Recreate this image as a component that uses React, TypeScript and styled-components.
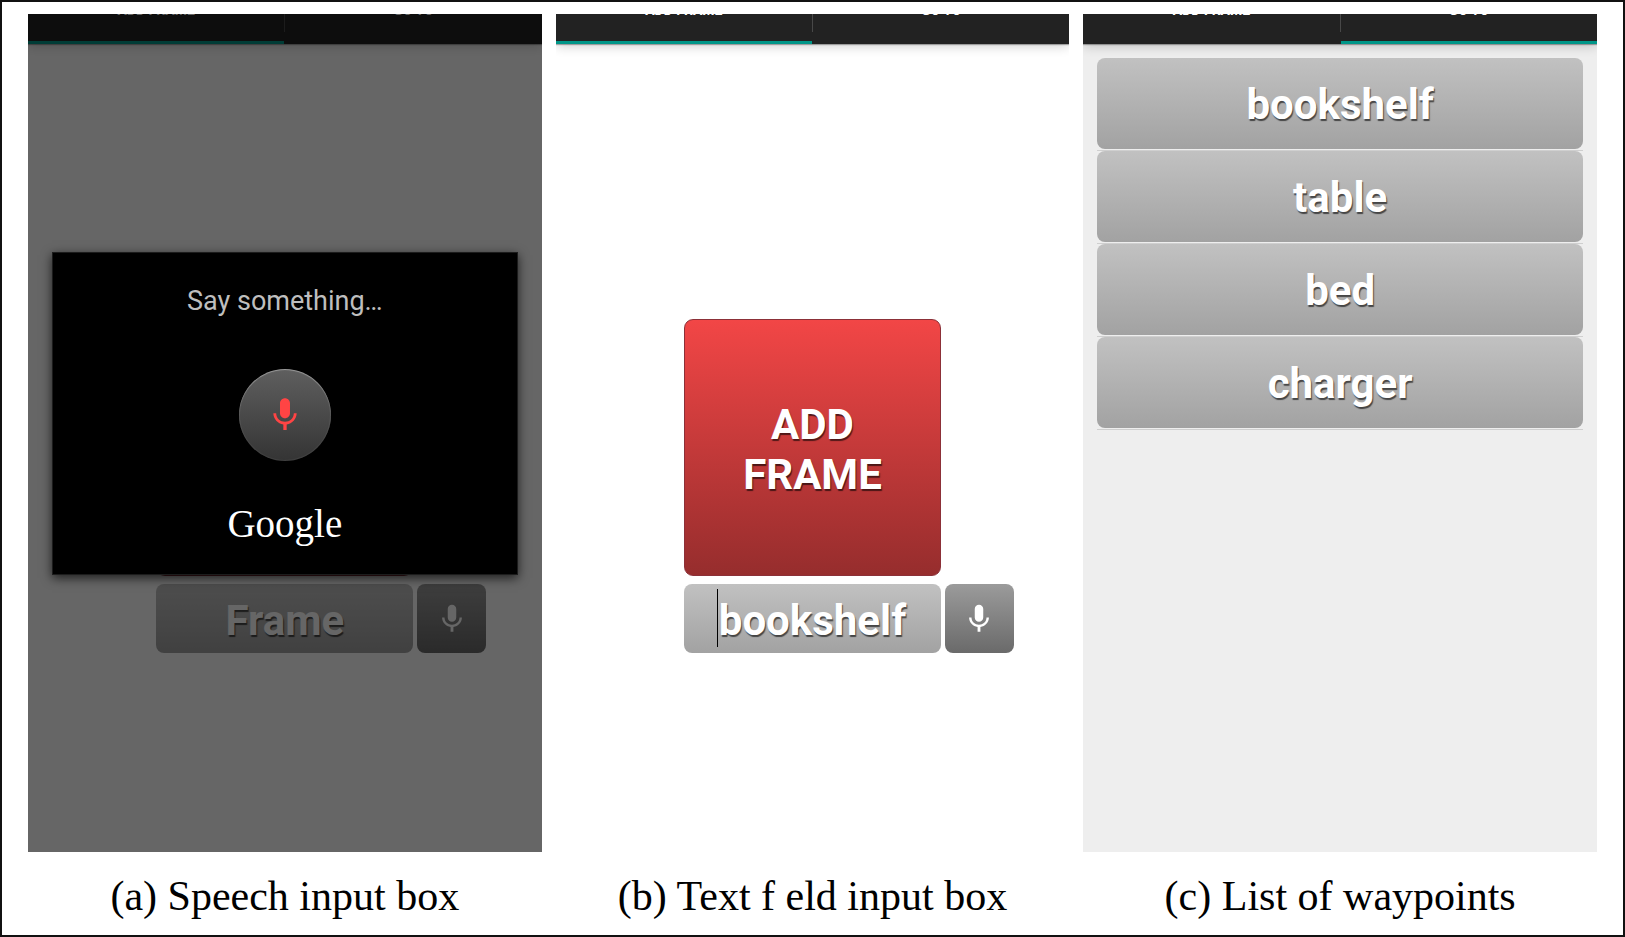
import React from 'react';
import styled, { createGlobalStyle } from 'styled-components';

const GlobalStyle = createGlobalStyle`
  *, *::before, *::after { box-sizing: border-box; }
  body { margin: 0; background: #fff; }
  button, input { font: inherit; margin: 0; border: 0; padding: 0; }
`;

const Sheet = styled.main`
  display: grid;
  grid-template-columns: repeat(3, minmax(0, 1fr));
  column-gap: 14px;
  min-height: 100vh;
  padding: 12px 26px 0;
  border: 2px solid #111;
  background: #fff;
`;

const Figure = styled.figure`
  display: flex;
  flex-direction: column;
  margin: 0;
`;

const Caption = styled.figcaption`
  padding: 20px 0 15px;
  font-family: 'Liberation Serif', serif;
  font-size: 42px;
  line-height: 48px;
  text-align: center;
  white-space: nowrap;
  color: #000;
`;

const Screen = styled.section<{ $tone?: string }>`
  position: relative;
  flex: 1;
  display: flex;
  flex-direction: column;
  overflow: hidden;
  background: ${(p) => p.$tone ?? '#fff'};
  font-family: Roboto, sans-serif;
`;

const TabBar = styled.nav`
  display: flex;
  align-items: flex-end;
  height: 30px;
  background: #222;
  box-shadow: 0 1px 1px rgba(0, 0, 0, 0.3), 0 2px 12px rgba(0, 0, 0, 0.2);
`;

const TabClip = styled.div`
  display: flex;
  flex: 1;
  align-items: flex-end;
  height: 30px;
  overflow: hidden;
`;

const Tab = styled.button<{ $active: boolean }>`
  flex: 1;
  height: 66px;
  border-bottom: 3px solid ${(p) => (p.$active ? '#009688' : '#222')};
  background: #222;
  color: #fff;
  font-size: 14px;
  font-weight: 700;
  line-height: 16px;
`;

const TabDivider = styled.span`
  width: 1px;
  height: 42px;
  margin-bottom: 12px;
  background: #484848;
`;

const ControlsArea = styled.div`
  flex: 1;
`;

const Controls = styled.div`
  display: grid;
  grid-template-columns: 50% 69px;
  gap: 8px 4px;
  width: 100%;
  margin-left: 25%;
  padding-top: 275px;
`;

const AddButton = styled.button`
  aspect-ratio: 1;
  padding-top: 6px;
  border: 1px solid #8c3038;
  border-radius: 9px;
  background: linear-gradient(#f24646, #962d2d);
  color: #fff;
  font-size: 42px;
  font-weight: 700;
  line-height: 50px;
  text-shadow: 1px 2px 1px rgba(0, 0, 0, 0.6);
`;

const FieldBox = styled.div`
  position: relative;
  grid-column: 1;
  display: flex;
`;

const Field = styled.input`
  width: 100%;
  height: 69px;
  padding-top: 4px;
  border-radius: 8px;
  background: linear-gradient(#c1c1c1, #a2a2a2);
  color: #fff;
  font-size: 42px;
  font-weight: 700;
  text-align: center;
  text-shadow: 1px 2px 1px rgba(0, 0, 0, 0.6);

  &::placeholder {
    color: #fff;
    opacity: 1;
  }
`;

const Caret = styled.span`
  position: absolute;
  top: 5px;
  bottom: 6px;
  left: 13%;
  width: 1px;
  background: #000;
`;

const MicButton = styled.button`
  display: grid;
  place-items: center;
  height: 69px;
  padding-top: 2px;
  border-radius: 8px;
  background: linear-gradient(#9b9b9b, #6a6a6a);
  color: #fff;
`;

const Scrim = styled.div`
  position: absolute;
  inset: 0;
  background: rgba(0, 0, 0, 0.6);
`;

const Dialog = styled.div`
  position: absolute;
  top: 238px;
  left: 24px;
  right: 24px;
  display: flex;
  flex-direction: column;
  align-items: center;
  padding: 32px 0 28px;
  border: 1px solid #1c1c1c;
  background: #000;
  box-shadow: 0 3px 10px rgba(0, 0, 0, 0.7);
`;

const Prompt = styled.p`
  margin: 0 0 52px;
  color: #bebebe;
  font-size: 27px;
  line-height: 32px;
`;

const ListenButton = styled.button`
  display: grid;
  place-items: center;
  width: 92px;
  height: 92px;
  border-radius: 50%;
  background: linear-gradient(#5f5f5f, #343434);
  box-shadow: inset 0 1px 1px rgba(255, 255, 255, 0.35), inset 0 0 1px 1px rgba(255, 255, 255, 0.06);
  color: #ff4444;
`;

const Brand = styled.span`
  margin-top: 41px;
  color: #fff;
  font-family: 'Liberation Serif', serif;
  font-size: 39px;
  line-height: 44px;
`;

const WaypointList = styled.ul`
  margin: 0;
  padding: 14px 14px 0;
  list-style: none;
`;

const WaypointItem = styled.li`
  padding-bottom: 1px;
  border-bottom: 1px solid #cfcfcf;
`;

const WaypointButton = styled.button`
  display: block;
  width: 100%;
  height: 91px;
  padding-top: 3px;
  border-radius: 8px;
  background: linear-gradient(#c1c1c1, #a2a2a2);
  color: #fff;
  font-size: 42px;
  font-weight: 700;
  line-height: 50px;
  text-shadow: 1px 2px 1px rgba(0, 0, 0, 0.6);
`;

function MicIcon({ size }: { size: number }) {
  return (
    <svg width={size} height={size} viewBox="0 0 24 24" fill="currentColor" aria-hidden="true">
      <path d="M12 14c1.66 0 2.99-1.34 2.99-3L15 5c0-1.66-1.34-3-3-3S9 3.34 9 5v6c0 1.66 1.34 3 3 3zm5.3-3c0 3-2.54 5.1-5.3 5.1S6.7 14 6.7 11H5c0 3.41 2.72 6.23 6 6.72V21h2v-3.28c3.28-.48 6-3.3 6-6.72h-1.7z" />
    </svg>
  );
}

function Tabs({ active }: { active: 'add' | 'goto' }) {
  return (
    <TabBar>
      <TabClip>
        <Tab type="button" $active={active === 'add'}>ADD FRAME</Tab>
        <TabDivider />
        <Tab type="button" $active={active === 'goto'}>GO TO</Tab>
      </TabClip>
    </TabBar>
  );
}

function FrameForm({ value, caret }: { value: string; caret?: boolean }) {
  return (
    <ControlsArea>
      <Controls>
        <AddButton type="button">
          ADD
          <br />
          FRAME
        </AddButton>
        <FieldBox>
          <Field type="text" aria-label="Frame name" placeholder="Frame" defaultValue={value} />
          {caret && <Caret />}
        </FieldBox>
        <MicButton type="button" aria-label="Speak frame name">
          <MicIcon size={34} />
        </MicButton>
      </Controls>
    </ControlsArea>
  );
}

const waypoints = ['bookshelf', 'table', 'bed', 'charger'];

export default function App() {
  return (
    <>
      <GlobalStyle />
      <Sheet>
        <Figure>
          <Screen>
            <Tabs active="add" />
            <FrameForm value="" />
            <Scrim />
            <Dialog role="dialog" aria-label="Speech input">
              <Prompt>Say something…</Prompt>
              <ListenButton type="button" aria-label="Listen">
                <MicIcon size={40} />
              </ListenButton>
              <Brand>Google</Brand>
            </Dialog>
          </Screen>
          <Caption>(a) Speech input box</Caption>
        </Figure>
        <Figure>
          <Screen>
            <Tabs active="add" />
            <FrameForm value="bookshelf" caret />
          </Screen>
          <Caption>(b) Text f eld input box</Caption>
        </Figure>
        <Figure>
          <Screen $tone="#eeeeee">
            <Tabs active="goto" />
            <WaypointList>
              {waypoints.map((name) => (
                <WaypointItem key={name}>
                  <WaypointButton type="button">{name}</WaypointButton>
                </WaypointItem>
              ))}
            </WaypointList>
          </Screen>
          <Caption>(c) List of waypoints</Caption>
        </Figure>
      </Sheet>
    </>
  );
}
